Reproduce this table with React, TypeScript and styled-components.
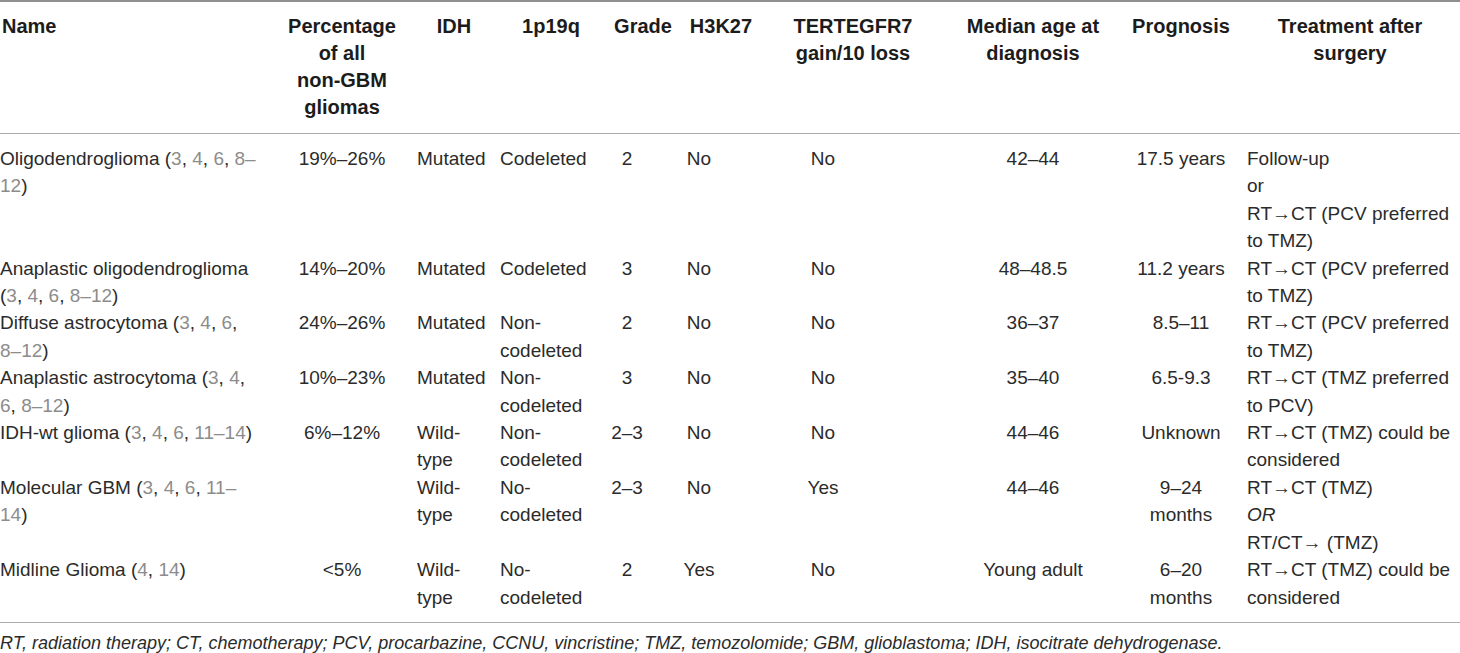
import React from 'react';
import styled, { createGlobalStyle } from 'styled-components';

type Align = 'left' | 'center';

type Column = {
  width: number;
  headAlign: Align;
  headPad?: string;
  cellAlign: Align;
  cellPad?: string;
};

type Row = React.ReactNode[][];

const GlobalStyle = createGlobalStyle`
  html, body {
    margin: 0;
    padding: 0;
    background: #ffffff;
  }
  body {
    font-family: "Liberation Sans", Arial, Helvetica, sans-serif;
    color: #2b2b2b;
  }
`;

// column widths add up to the 1460px page
const columns: Column[] = [
  { width: 280, headAlign: 'left', headPad: '0 0 0 2px', cellAlign: 'left' },
  { width: 124, headAlign: 'center', cellAlign: 'center' },
  { width: 92, headAlign: 'center', headPad: '0 0 0 8px', cellAlign: 'left', cellPad: '0 0 0 13px' },
  { width: 110, headAlign: 'center', cellAlign: 'left', cellPad: '0 0 0 4px' },
  { width: 74, headAlign: 'center', cellAlign: 'center', cellPad: '0 32px 0 0' },
  { width: 82, headAlign: 'center', cellAlign: 'center', cellPad: '0 44px 0 0' },
  { width: 182, headAlign: 'center', cellAlign: 'center', cellPad: '0 60px 0 0' },
  { width: 178, headAlign: 'center', cellAlign: 'center' },
  { width: 118, headAlign: 'center', cellAlign: 'center' },
  { width: 220, headAlign: 'center', cellAlign: 'left', cellPad: '0 0 0 7px' },
];

const template = columns.map((c) => `${c.width}px`).join(' ');

const headings: string[][] = [
  ['Name'],
  ['Percentage', 'of all', 'non-GBM', 'gliomas'],
  ['IDH'],
  ['1p19q'],
  ['Grade'],
  ['H3K27'],
  ['TERTEGFR7', 'gain/10 loss'],
  ['Median age at', 'diagnosis'],
  ['Prognosis'],
  ['Treatment after', 'surgery'],
];

const Table = styled.div`
  width: 1460px;
  border-top: 2px solid #8f8f8f;
`;

const Head = styled.div`
  display: grid;
  grid-template-columns: ${template};
  padding: 11px 0 12px;
  border-bottom: 1px solid #adadad;
`;

const HeadCell = styled.div<{ $align: Align; $pad?: string }>`
  text-align: ${(p) => p.$align};
  padding: ${(p) => p.$pad || '0'};
  font-size: 20px;
  font-weight: 700;
  line-height: 27px;
  color: #1c1c1c;
  white-space: nowrap;
`;

const Body = styled.div`
  padding: 11px 0 11px;
  border-bottom: 1px solid #adadad;
`;

const BodyRow = styled.div`
  display: grid;
  grid-template-columns: ${template};
`;

const Cell = styled.div<{ $align: Align; $pad?: string }>`
  text-align: ${(p) => p.$align};
  padding: ${(p) => p.$pad || '0'};
  font-size: 19px;
  line-height: 27.4px;
  white-space: nowrap;
`;

const Line = styled.div`
  display: block;
`;

const Ref = styled.span`
  color: #8c8c8c;
`;

const Em = styled.i`
  font-style: italic;
`;

const Footnote = styled.p`
  margin: 0;
  padding-top: 10px;
  font-size: 18px;
  line-height: 20px;
  font-style: italic;
  color: #2b2b2b;
  white-space: nowrap;
`;

const rows: Row[] = [
  [
    [<>Oligodendroglioma (<Ref>3</Ref>, <Ref>4</Ref>, <Ref>6</Ref>, <Ref>8–</Ref></>, <><Ref>12</Ref>)</>],
    ['19%–26%'],
    ['Mutated'],
    ['Codeleted'],
    ['2'],
    ['No'],
    ['No'],
    ['42–44'],
    ['17.5 years'],
    ['Follow-up', 'or', 'RT→CT (PCV preferred', 'to TMZ)'],
  ],
  [
    ['Anaplastic oligodendroglioma', <>(<Ref>3</Ref>, <Ref>4</Ref>, <Ref>6</Ref>, <Ref>8–12</Ref>)</>],
    ['14%–20%'],
    ['Mutated'],
    ['Codeleted'],
    ['3'],
    ['No'],
    ['No'],
    ['48–48.5'],
    ['11.2 years'],
    ['RT→CT (PCV preferred', 'to TMZ)'],
  ],
  [
    [<>Diffuse astrocytoma (<Ref>3</Ref>, <Ref>4</Ref>, <Ref>6</Ref>,</>, <><Ref>8–12</Ref>)</>],
    ['24%–26%'],
    ['Mutated'],
    ['Non-', 'codeleted'],
    ['2'],
    ['No'],
    ['No'],
    ['36–37'],
    ['8.5–11'],
    ['RT→CT (PCV preferred', 'to TMZ)'],
  ],
  [
    [<>Anaplastic astrocytoma (<Ref>3</Ref>, <Ref>4</Ref>,</>, <><Ref>6</Ref>, <Ref>8–12</Ref>)</>],
    ['10%–23%'],
    ['Mutated'],
    ['Non-', 'codeleted'],
    ['3'],
    ['No'],
    ['No'],
    ['35–40'],
    ['6.5-9.3'],
    ['RT→CT (TMZ preferred', 'to PCV)'],
  ],
  [
    [<>IDH-wt glioma (<Ref>3</Ref>, <Ref>4</Ref>, <Ref>6</Ref>, <Ref>11–14</Ref>)</>],
    ['6%–12%'],
    ['Wild-', 'type'],
    ['Non-', 'codeleted'],
    ['2–3'],
    ['No'],
    ['No'],
    ['44–46'],
    ['Unknown'],
    ['RT→CT (TMZ) could be', 'considered'],
  ],
  [
    [<>Molecular GBM (<Ref>3</Ref>, <Ref>4</Ref>, <Ref>6</Ref>, <Ref>11–</Ref></>, <><Ref>14</Ref>)</>],
    [''],
    ['Wild-', 'type'],
    ['No-', 'codeleted'],
    ['2–3'],
    ['No'],
    ['Yes'],
    ['44–46'],
    ['9–24', 'months'],
    ['RT→CT (TMZ)', <Em>OR</Em>, 'RT/CT→ (TMZ)'],
  ],
  [
    [<>Midline Glioma (<Ref>4</Ref>, <Ref>14</Ref>)</>],
    ['<5%'],
    ['Wild-', 'type'],
    ['No-', 'codeleted'],
    ['2'],
    ['Yes'],
    ['No'],
    ['Young adult'],
    ['6–20', 'months'],
    ['RT→CT (TMZ) could be', 'considered'],
  ],
];

export default function App() {
  return (
    <>
      <GlobalStyle />
      <Table>
        <Head>
          {headings.map((lines, i) => (
            <HeadCell key={i} $align={columns[i].headAlign} $pad={columns[i].headPad}>
              {lines.map((l, j) => (
                <Line key={j}>{l}</Line>
              ))}
            </HeadCell>
          ))}
        </Head>
        <Body>
          {rows.map((row, r) => (
            <BodyRow key={r}>
              {row.map((lines, i) => (
                <Cell key={i} $align={columns[i].cellAlign} $pad={columns[i].cellPad}>
                  {lines.map((l, j) => (
                    <Line key={j}>{l}</Line>
                  ))}
                </Cell>
              ))}
            </BodyRow>
          ))}
        </Body>
        <Footnote>
          RT, radiation therapy; CT, chemotherapy; PCV, procarbazine, CCNU, vincristine; TMZ,
          temozolomide; GBM, glioblastoma; IDH, isocitrate dehydrogenase.
        </Footnote>
      </Table>
    </>
  );
}
